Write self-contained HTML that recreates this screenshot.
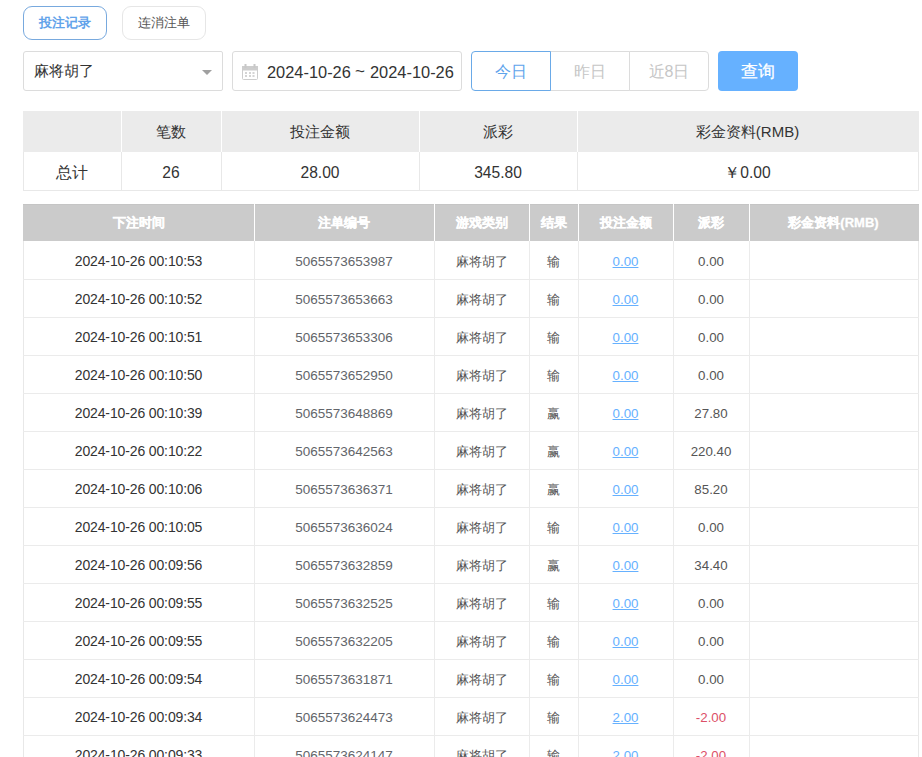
<!DOCTYPE html>
<html><head><meta charset="utf-8"><style>
*{box-sizing:border-box;margin:0;padding:0}
html,body{width:922px;height:757px;overflow:hidden;background:#fff;font-family:"Liberation Sans",sans-serif;color:#333}
.a{position:absolute}
.tab{position:absolute;top:6px;height:34px;width:84px;border:1px solid #e6e6e6;border-radius:9px;font-size:13px;line-height:32px;text-align:center;color:#555}
.tab.on{border-color:#78a9de;color:#62a3ea;font-weight:bold}
.inp{position:absolute;top:51px;height:40px;border:1px solid #dcdcdc;border-radius:3px;background:#fff}
.seg{position:absolute;top:51px;height:40px;width:80px;border:1px solid #dcdcdc;font-size:16px;line-height:40px;text-align:center;color:#c6c6c6;background:#fff}
.btn{position:absolute;top:51px;left:718px;width:80px;height:40px;border-radius:4px;background:#66b1ff;color:#fff;font-size:16.5px;-webkit-text-stroke:0.25px #fff;line-height:40px;text-align:center}
.c{position:absolute;text-align:center;white-space:nowrap}
.vl{position:absolute;width:1px}
.hh{color:#fff;font-weight:bold;-webkit-text-stroke:0.3px #fff;font-size:13px;line-height:37px;top:204px;height:37px}
.b{font-size:13.3px;height:37px;line-height:37px;color:#555}
.lk{color:#66b1ff;text-decoration:underline}
.rd{color:#f56c6c}
</style></head><body>
<div class="tab on" style="left:23px">投注记录</div>
<div class="tab" style="left:122px">连消注单</div>
<div class="inp" style="left:23px;width:200px;border-radius:3px 2px 2px 3px"><div class="a" style="left:10px;top:0;line-height:38px;font-size:15px;color:#333">麻将胡了</div><div class="a" style="left:178px;top:18px;width:0;height:0;border-left:5px solid transparent;border-right:5px solid transparent;border-top:5px solid #a0a0a0"></div></div>
<div class="inp" style="left:232px;width:230px;overflow:hidden"><svg class="a" style="left:9px;top:12px" width="16" height="16" viewBox="0 0 16 16"><rect x="0.5" y="2.5" width="15" height="13" rx="1" fill="none" stroke="#cdcdcd"/><rect x="0" y="2" width="16" height="4.5" fill="#cdcdcd"/><rect x="2.5" y="0" width="2" height="4" fill="#c8c8c8"/><rect x="11.5" y="0" width="2" height="4" fill="#c8c8c8"/><g fill="#d4d4d4"><rect x="3" y="8" width="2" height="2"/><rect x="7" y="8" width="2" height="2"/><rect x="10.5" y="8" width="2" height="2"/><rect x="3" y="11" width="2" height="2"/><rect x="7" y="11" width="2" height="2"/><rect x="10.5" y="11" width="2" height="2"/></g></svg><div class="a" style="left:34px;top:1px;line-height:38px;font-size:16.4px;color:#333;white-space:nowrap">2024-10-26</div><div class="a" style="left:122px;top:1px;line-height:38px;font-size:17px;color:#333;white-space:nowrap">~</div><div class="a" style="left:137px;top:1px;line-height:38px;font-size:16.4px;color:#333;white-space:nowrap">2024-10-26</div></div>
<div class="seg" style="left:471px;border-radius:4px 0 0 4px;border-color:#6aaae8;color:#5ea4ec;z-index:2">今日</div>
<div class="seg" style="left:550px">昨日</div>
<div class="seg" style="left:629px;border-radius:0 4px 4px 0">近8日</div>
<div class="btn">查询</div>
<div class="a" style="left:23px;top:111px;width:896px;height:41px;background:#ebebeb"></div>
<div class="a" style="left:23px;top:152px;width:896px;height:39px;border:1px solid #e8e8e8;border-top:0"></div>
<div class="vl" style="left:121px;top:111px;height:41px;background:#fff"></div>
<div class="vl" style="left:121px;top:152px;height:38px;background:#e8e8e8"></div>
<div class="vl" style="left:221px;top:111px;height:41px;background:#fff"></div>
<div class="vl" style="left:221px;top:152px;height:38px;background:#e8e8e8"></div>
<div class="vl" style="left:419px;top:111px;height:41px;background:#fff"></div>
<div class="vl" style="left:419px;top:152px;height:38px;background:#e8e8e8"></div>
<div class="vl" style="left:577px;top:111px;height:41px;background:#fff"></div>
<div class="vl" style="left:577px;top:152px;height:38px;background:#e8e8e8"></div>
<div class="c" style="left:23px;width:98px;top:111px;height:41px;line-height:41px;font-size:15px;color:#333"></div>
<div class="c" style="left:23px;width:98px;top:154px;height:38px;line-height:38px;font-size:15.6px;color:#333">总计</div>
<div class="c" style="left:121px;width:100px;top:111px;height:41px;line-height:41px;font-size:15px;color:#333">笔数</div>
<div class="c" style="left:121px;width:100px;top:154px;height:38px;line-height:38px;font-size:15.6px;color:#333">26</div>
<div class="c" style="left:221px;width:198px;top:111px;height:41px;line-height:41px;font-size:15px;color:#333">投注金额</div>
<div class="c" style="left:221px;width:198px;top:154px;height:38px;line-height:38px;font-size:15.6px;color:#333">28.00</div>
<div class="c" style="left:419px;width:158px;top:111px;height:41px;line-height:41px;font-size:15px;color:#333">派彩</div>
<div class="c" style="left:419px;width:158px;top:154px;height:38px;line-height:38px;font-size:15.6px;color:#333">345.80</div>
<div class="c" style="left:577px;width:341px;top:111px;height:41px;line-height:41px;font-size:15px;color:#333">彩金资料(RMB)</div>
<div class="c" style="left:577px;width:341px;top:154px;height:38px;line-height:38px;font-size:15.6px;color:#333">￥0.00</div>
<div class="a" style="left:23px;top:204px;width:896px;height:37px;background:#cbcbcb;border-top:1px solid #c5c5c5"></div>
<div class="vl" style="left:254px;top:204px;height:37px;background:#fff"></div>
<div class="vl" style="left:434px;top:204px;height:37px;background:#fff"></div>
<div class="vl" style="left:529px;top:204px;height:37px;background:#fff"></div>
<div class="vl" style="left:578px;top:204px;height:37px;background:#fff"></div>
<div class="vl" style="left:673px;top:204px;height:37px;background:#fff"></div>
<div class="vl" style="left:749px;top:204px;height:37px;background:#fff"></div>
<div class="c hh" style="left:23px;width:231px">下注时间</div>
<div class="c hh" style="left:254px;width:180px">注单编号</div>
<div class="c hh" style="left:434px;width:95px">游戏类别</div>
<div class="c hh" style="left:529px;width:49px">结果</div>
<div class="c hh" style="left:578px;width:95px">投注金额</div>
<div class="c hh" style="left:673px;width:76px">派彩</div>
<div class="c hh" style="left:749px;width:169px">彩金资料(RMB)</div>
<div class="vl" style="left:23px;top:241px;height:520px;background:#e8e8e8"></div>
<div class="vl" style="left:918px;top:241px;height:520px;background:#e8e8e8"></div>
<div class="vl" style="left:254px;top:241px;height:520px;background:#ebebeb"></div>
<div class="vl" style="left:434px;top:241px;height:520px;background:#ebebeb"></div>
<div class="vl" style="left:529px;top:241px;height:520px;background:#ebebeb"></div>
<div class="vl" style="left:578px;top:241px;height:520px;background:#ebebeb"></div>
<div class="vl" style="left:673px;top:241px;height:520px;background:#ebebeb"></div>
<div class="vl" style="left:749px;top:241px;height:520px;background:#ebebeb"></div>
<div class="a" style="left:23px;top:279px;width:896px;height:1px;background:#ebebeb"></div>
<div class="c b" style="left:23px;width:231px;top:243px;color:#333;font-size:14px;letter-spacing:-0.13px">2024-10-26 00:10:53</div>
<div class="c b" style="left:254px;width:180px;top:243px;font-size:13.5px;color:#62656a">5065573653987</div>
<div class="c b" style="left:434px;width:95px;top:243px;">麻将胡了</div>
<div class="c b" style="left:529px;width:49px;top:243px;">输</div>
<div class="c b" style="left:578px;width:95px;top:243px;"><span class="lk">0.00</span></div>
<div class="c b" style="left:673px;width:76px;top:243px;">0.00</div>
<div class="c b" style="left:749px;width:169px;top:243px;"></div>
<div class="a" style="left:23px;top:317px;width:896px;height:1px;background:#ebebeb"></div>
<div class="c b" style="left:23px;width:231px;top:281px;color:#333;font-size:14px;letter-spacing:-0.13px">2024-10-26 00:10:52</div>
<div class="c b" style="left:254px;width:180px;top:281px;font-size:13.5px;color:#62656a">5065573653663</div>
<div class="c b" style="left:434px;width:95px;top:281px;">麻将胡了</div>
<div class="c b" style="left:529px;width:49px;top:281px;">输</div>
<div class="c b" style="left:578px;width:95px;top:281px;"><span class="lk">0.00</span></div>
<div class="c b" style="left:673px;width:76px;top:281px;">0.00</div>
<div class="c b" style="left:749px;width:169px;top:281px;"></div>
<div class="a" style="left:23px;top:355px;width:896px;height:1px;background:#ebebeb"></div>
<div class="c b" style="left:23px;width:231px;top:319px;color:#333;font-size:14px;letter-spacing:-0.13px">2024-10-26 00:10:51</div>
<div class="c b" style="left:254px;width:180px;top:319px;font-size:13.5px;color:#62656a">5065573653306</div>
<div class="c b" style="left:434px;width:95px;top:319px;">麻将胡了</div>
<div class="c b" style="left:529px;width:49px;top:319px;">输</div>
<div class="c b" style="left:578px;width:95px;top:319px;"><span class="lk">0.00</span></div>
<div class="c b" style="left:673px;width:76px;top:319px;">0.00</div>
<div class="c b" style="left:749px;width:169px;top:319px;"></div>
<div class="a" style="left:23px;top:393px;width:896px;height:1px;background:#ebebeb"></div>
<div class="c b" style="left:23px;width:231px;top:357px;color:#333;font-size:14px;letter-spacing:-0.13px">2024-10-26 00:10:50</div>
<div class="c b" style="left:254px;width:180px;top:357px;font-size:13.5px;color:#62656a">5065573652950</div>
<div class="c b" style="left:434px;width:95px;top:357px;">麻将胡了</div>
<div class="c b" style="left:529px;width:49px;top:357px;">输</div>
<div class="c b" style="left:578px;width:95px;top:357px;"><span class="lk">0.00</span></div>
<div class="c b" style="left:673px;width:76px;top:357px;">0.00</div>
<div class="c b" style="left:749px;width:169px;top:357px;"></div>
<div class="a" style="left:23px;top:431px;width:896px;height:1px;background:#ebebeb"></div>
<div class="c b" style="left:23px;width:231px;top:395px;color:#333;font-size:14px;letter-spacing:-0.13px">2024-10-26 00:10:39</div>
<div class="c b" style="left:254px;width:180px;top:395px;font-size:13.5px;color:#62656a">5065573648869</div>
<div class="c b" style="left:434px;width:95px;top:395px;">麻将胡了</div>
<div class="c b" style="left:529px;width:49px;top:395px;">赢</div>
<div class="c b" style="left:578px;width:95px;top:395px;"><span class="lk">0.00</span></div>
<div class="c b" style="left:673px;width:76px;top:395px;">27.80</div>
<div class="c b" style="left:749px;width:169px;top:395px;"></div>
<div class="a" style="left:23px;top:469px;width:896px;height:1px;background:#ebebeb"></div>
<div class="c b" style="left:23px;width:231px;top:433px;color:#333;font-size:14px;letter-spacing:-0.13px">2024-10-26 00:10:22</div>
<div class="c b" style="left:254px;width:180px;top:433px;font-size:13.5px;color:#62656a">5065573642563</div>
<div class="c b" style="left:434px;width:95px;top:433px;">麻将胡了</div>
<div class="c b" style="left:529px;width:49px;top:433px;">赢</div>
<div class="c b" style="left:578px;width:95px;top:433px;"><span class="lk">0.00</span></div>
<div class="c b" style="left:673px;width:76px;top:433px;">220.40</div>
<div class="c b" style="left:749px;width:169px;top:433px;"></div>
<div class="a" style="left:23px;top:507px;width:896px;height:1px;background:#ebebeb"></div>
<div class="c b" style="left:23px;width:231px;top:471px;color:#333;font-size:14px;letter-spacing:-0.13px">2024-10-26 00:10:06</div>
<div class="c b" style="left:254px;width:180px;top:471px;font-size:13.5px;color:#62656a">5065573636371</div>
<div class="c b" style="left:434px;width:95px;top:471px;">麻将胡了</div>
<div class="c b" style="left:529px;width:49px;top:471px;">赢</div>
<div class="c b" style="left:578px;width:95px;top:471px;"><span class="lk">0.00</span></div>
<div class="c b" style="left:673px;width:76px;top:471px;">85.20</div>
<div class="c b" style="left:749px;width:169px;top:471px;"></div>
<div class="a" style="left:23px;top:545px;width:896px;height:1px;background:#ebebeb"></div>
<div class="c b" style="left:23px;width:231px;top:509px;color:#333;font-size:14px;letter-spacing:-0.13px">2024-10-26 00:10:05</div>
<div class="c b" style="left:254px;width:180px;top:509px;font-size:13.5px;color:#62656a">5065573636024</div>
<div class="c b" style="left:434px;width:95px;top:509px;">麻将胡了</div>
<div class="c b" style="left:529px;width:49px;top:509px;">输</div>
<div class="c b" style="left:578px;width:95px;top:509px;"><span class="lk">0.00</span></div>
<div class="c b" style="left:673px;width:76px;top:509px;">0.00</div>
<div class="c b" style="left:749px;width:169px;top:509px;"></div>
<div class="a" style="left:23px;top:583px;width:896px;height:1px;background:#ebebeb"></div>
<div class="c b" style="left:23px;width:231px;top:547px;color:#333;font-size:14px;letter-spacing:-0.13px">2024-10-26 00:09:56</div>
<div class="c b" style="left:254px;width:180px;top:547px;font-size:13.5px;color:#62656a">5065573632859</div>
<div class="c b" style="left:434px;width:95px;top:547px;">麻将胡了</div>
<div class="c b" style="left:529px;width:49px;top:547px;">赢</div>
<div class="c b" style="left:578px;width:95px;top:547px;"><span class="lk">0.00</span></div>
<div class="c b" style="left:673px;width:76px;top:547px;">34.40</div>
<div class="c b" style="left:749px;width:169px;top:547px;"></div>
<div class="a" style="left:23px;top:621px;width:896px;height:1px;background:#ebebeb"></div>
<div class="c b" style="left:23px;width:231px;top:585px;color:#333;font-size:14px;letter-spacing:-0.13px">2024-10-26 00:09:55</div>
<div class="c b" style="left:254px;width:180px;top:585px;font-size:13.5px;color:#62656a">5065573632525</div>
<div class="c b" style="left:434px;width:95px;top:585px;">麻将胡了</div>
<div class="c b" style="left:529px;width:49px;top:585px;">输</div>
<div class="c b" style="left:578px;width:95px;top:585px;"><span class="lk">0.00</span></div>
<div class="c b" style="left:673px;width:76px;top:585px;">0.00</div>
<div class="c b" style="left:749px;width:169px;top:585px;"></div>
<div class="a" style="left:23px;top:659px;width:896px;height:1px;background:#ebebeb"></div>
<div class="c b" style="left:23px;width:231px;top:623px;color:#333;font-size:14px;letter-spacing:-0.13px">2024-10-26 00:09:55</div>
<div class="c b" style="left:254px;width:180px;top:623px;font-size:13.5px;color:#62656a">5065573632205</div>
<div class="c b" style="left:434px;width:95px;top:623px;">麻将胡了</div>
<div class="c b" style="left:529px;width:49px;top:623px;">输</div>
<div class="c b" style="left:578px;width:95px;top:623px;"><span class="lk">0.00</span></div>
<div class="c b" style="left:673px;width:76px;top:623px;">0.00</div>
<div class="c b" style="left:749px;width:169px;top:623px;"></div>
<div class="a" style="left:23px;top:697px;width:896px;height:1px;background:#ebebeb"></div>
<div class="c b" style="left:23px;width:231px;top:661px;color:#333;font-size:14px;letter-spacing:-0.13px">2024-10-26 00:09:54</div>
<div class="c b" style="left:254px;width:180px;top:661px;font-size:13.5px;color:#62656a">5065573631871</div>
<div class="c b" style="left:434px;width:95px;top:661px;">麻将胡了</div>
<div class="c b" style="left:529px;width:49px;top:661px;">输</div>
<div class="c b" style="left:578px;width:95px;top:661px;"><span class="lk">0.00</span></div>
<div class="c b" style="left:673px;width:76px;top:661px;">0.00</div>
<div class="c b" style="left:749px;width:169px;top:661px;"></div>
<div class="a" style="left:23px;top:735px;width:896px;height:1px;background:#ebebeb"></div>
<div class="c b" style="left:23px;width:231px;top:699px;color:#333;font-size:14px;letter-spacing:-0.13px">2024-10-26 00:09:34</div>
<div class="c b" style="left:254px;width:180px;top:699px;font-size:13.5px;color:#62656a">5065573624473</div>
<div class="c b" style="left:434px;width:95px;top:699px;">麻将胡了</div>
<div class="c b" style="left:529px;width:49px;top:699px;">输</div>
<div class="c b" style="left:578px;width:95px;top:699px;"><span class="lk">2.00</span></div>
<div class="c b" style="left:673px;width:76px;top:699px;color:#dc5068">-2.00</div>
<div class="c b" style="left:749px;width:169px;top:699px;"></div>
<div class="a" style="left:23px;top:773px;width:896px;height:1px;background:#ebebeb"></div>
<div class="c b" style="left:23px;width:231px;top:737px;color:#333;font-size:14px;letter-spacing:-0.13px">2024-10-26 00:09:33</div>
<div class="c b" style="left:254px;width:180px;top:737px;font-size:13.5px;color:#62656a">5065573624147</div>
<div class="c b" style="left:434px;width:95px;top:737px;">麻将胡了</div>
<div class="c b" style="left:529px;width:49px;top:737px;">输</div>
<div class="c b" style="left:578px;width:95px;top:737px;"><span class="lk">2.00</span></div>
<div class="c b" style="left:673px;width:76px;top:737px;color:#dc5068">-2.00</div>
<div class="c b" style="left:749px;width:169px;top:737px;"></div>
</body></html>
